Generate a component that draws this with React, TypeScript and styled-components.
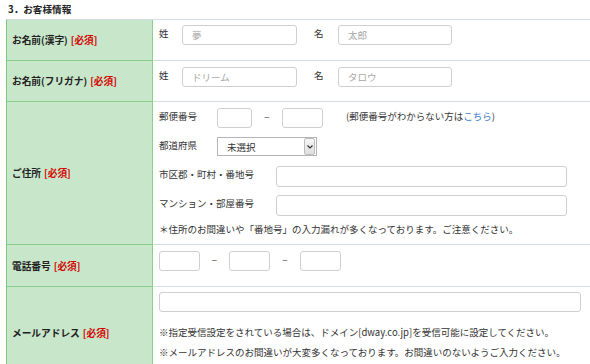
import * as React from "react";
import styled, { createGlobalStyle } from "styled-components";

const GlobalStyle = createGlobalStyle`
  html, body {
    margin: 0;
    padding: 0;
    background: #fff;
    overflow: hidden;
  }
  body {
    font-family: "Noto Sans CJK JP", "Noto Sans", sans-serif;
    color: #333;
    font-size: 9.5px;
  }
`;

const Page = styled.div`
  width: 590px;
  height: 364px;
  overflow: hidden;
`;

const Title = styled.h3`
  margin: 0;
  padding: 2px 0 0 8px;
  height: 19px;
  box-sizing: border-box;
  font-size: 9.6px;
  line-height: 14px;
  font-weight: bold;
  color: #222;
`;

const Table = styled.div`
  margin-left: 6px;
  width: 600px;
  border-top: 1px solid #d6dce3;
  border-left: 1px solid #7cc77c;
  display: flex;
  flex-direction: column;
`;

const Row = styled.div<{ $h: number }>`
  display: flex;
  height: ${(p) => p.$h}px;
  box-sizing: border-box;
`;

const Head = styled.div`
  width: 146px;
  flex-shrink: 0;
  background: #c8e6c9;
  border-right: 1px solid #8ccf8a;
  border-bottom: 1px solid #8ccf8a;
  display: flex;
  align-items: center;
  padding-left: 5px;
  box-sizing: border-box;
  font-weight: bold;
  font-size: 9.7px;
  color: #222;
`;

const Required = styled.span`
  color: #d40000;
  margin-left: 3px;
`;

const Cell = styled.div<{ $pt?: number }>`
  flex: 1;
  border-bottom: 1px solid #d6dce3;
  padding: ${(p) => p.$pt ?? 5}px 6px 0;
  box-sizing: border-box;
`;

const Line = styled.div`
  display: flex;
  align-items: flex-start;
  height: 21px;
`;

const Label = styled.span<{ $w: number }>`
  width: ${(p) => p.$w}px;
  flex-shrink: 0;
  line-height: 14px;
  padding-top: 1px;
`;

const Input = styled.div<{ $w: number; $h?: number; $ml?: number }>`
  width: ${(p) => p.$w}px;
  height: ${(p) => p.$h ?? 20}px;
  margin-left: ${(p) => p.$ml ?? 0}px;
  flex-shrink: 0;
  box-sizing: border-box;
  border: 1px solid #cfcfcf;
  border-radius: 3px;
  background: #fff;
  color: #a8a8a8;
  padding-left: 9px;
  display: flex;
  align-items: center;
  font-size: 9.5px;
`;

const Dash = styled.span<{ $w: number }>`
  width: ${(p) => p.$w}px;
  text-align: center;
  flex-shrink: 0;
  line-height: 18px;
  color: #555;
`;

const Stack = styled.div`
  display: flex;
  flex-direction: column;
  gap: 8px;
`;

const Note = styled.div`
  line-height: 14px;
  margin-top: -2px;
`;

const Link = styled.a`
  color: #3a7bc8;
  text-decoration: none;
`;

const Select = styled.div`
  width: 100px;
  height: 19px;
  box-sizing: border-box;
  border: 1px solid #b5b5b5;
  display: flex;
  align-items: center;
  background: #fff;
`;

const SelectText = styled.span`
  flex: 1;
  padding-left: 9px;
  color: #333;
`;

const SelectArrow = styled.span`
  width: 9px;
  height: 15px;
  margin-right: 1px;
  border: 1px solid #bdbdbd;
  border-radius: 2px;
  background: linear-gradient(#f6f6f6, #dedede);
  display: flex;
  align-items: center;
  justify-content: center;
`;

const MailNotes = styled.div`
  margin-top: 10px;
  line-height: 20px;
`;

export default function App() {
  return (
    <Page>
      <GlobalStyle />
      <Title>3．お客様情報</Title>
      <Table>
        <Row $h={41}>
          <Head>
            お名前(漢字)<Required>[必須]</Required>
          </Head>
          <Cell>
            <Line>
              <Label $w={23}>姓</Label>
              <Input $w={115}>夢</Input>
              <Label $w={24} style={{ marginLeft: 17 }}>名</Label>
              <Input $w={114}>太郎</Input>
            </Line>
          </Cell>
        </Row>
        <Row $h={41}>
          <Head>
            お名前(フリガナ)<Required>[必須]</Required>
          </Head>
          <Cell $pt={6}>
            <Line>
              <Label $w={23}>姓</Label>
              <Input $w={115}>ドリーム</Input>
              <Label $w={24} style={{ marginLeft: 17 }}>名</Label>
              <Input $w={114}>タロウ</Input>
            </Line>
          </Cell>
        </Row>
        <Row $h={143}>
          <Head>
            ご住所<Required>[必須]</Required>
          </Head>
          <Cell $pt={6}>
            <Stack>
              <Line>
                <Label $w={58}>郵便番号</Label>
                <Input $w={35} />
                <Dash $w={30}>−</Dash>
                <Input $w={41} />
                <Label $w={240} style={{ marginLeft: 23 }}>
                  (郵便番号がわからない方は<Link href="#">こちら</Link>)
                </Label>
              </Line>
              <Line>
                <Label $w={58}>都道府県</Label>
                <Select>
                  <SelectText>未選択</SelectText>
                  <SelectArrow>
                    <svg width="6" height="4" viewBox="0 0 6 4">
                      <path d="M0.5 0.5 L3 3 L5.5 0.5" fill="none" stroke="#333" strokeWidth="1.2" />
                    </svg>
                  </SelectArrow>
                </Select>
              </Line>
              <Line>
                <Label $w={117}>市区郡・町村・番地号</Label>
                <Input $w={291} $h={21} />
              </Line>
              <Line>
                <Label $w={117}>マンション・部屋番号</Label>
                <Input $w={291} $h={21} />
              </Line>
              <Note>＊住所のお間違いや「番地号」の入力漏れが多くなっております。ご注意ください。</Note>
            </Stack>
          </Cell>
        </Row>
        <Row $h={42}>
          <Head>
            電話番号<Required>[必須]</Required>
          </Head>
          <Cell $pt={6}>
            <Line>
              <Input $w={41} />
              <Dash $w={29}>−</Dash>
              <Input $w={41} />
              <Dash $w={30}>−</Dash>
              <Input $w={41} />
            </Line>
          </Cell>
        </Row>
        <Row $h={92}>
          <Head>
            メールアドレス<Required>[必須]</Required>
          </Head>
          <Cell $pt={5}>
            <Input $w={422} />
            <MailNotes>
              <div>※指定受信設定をされている場合は、ドメイン[dway.co.jp]を受信可能に設定してください。</div>
              <div>※メールアドレスのお間違いが大変多くなっております。お間違いのないようご入力ください。</div>
            </MailNotes>
          </Cell>
        </Row>
      </Table>
    </Page>
  );
}
